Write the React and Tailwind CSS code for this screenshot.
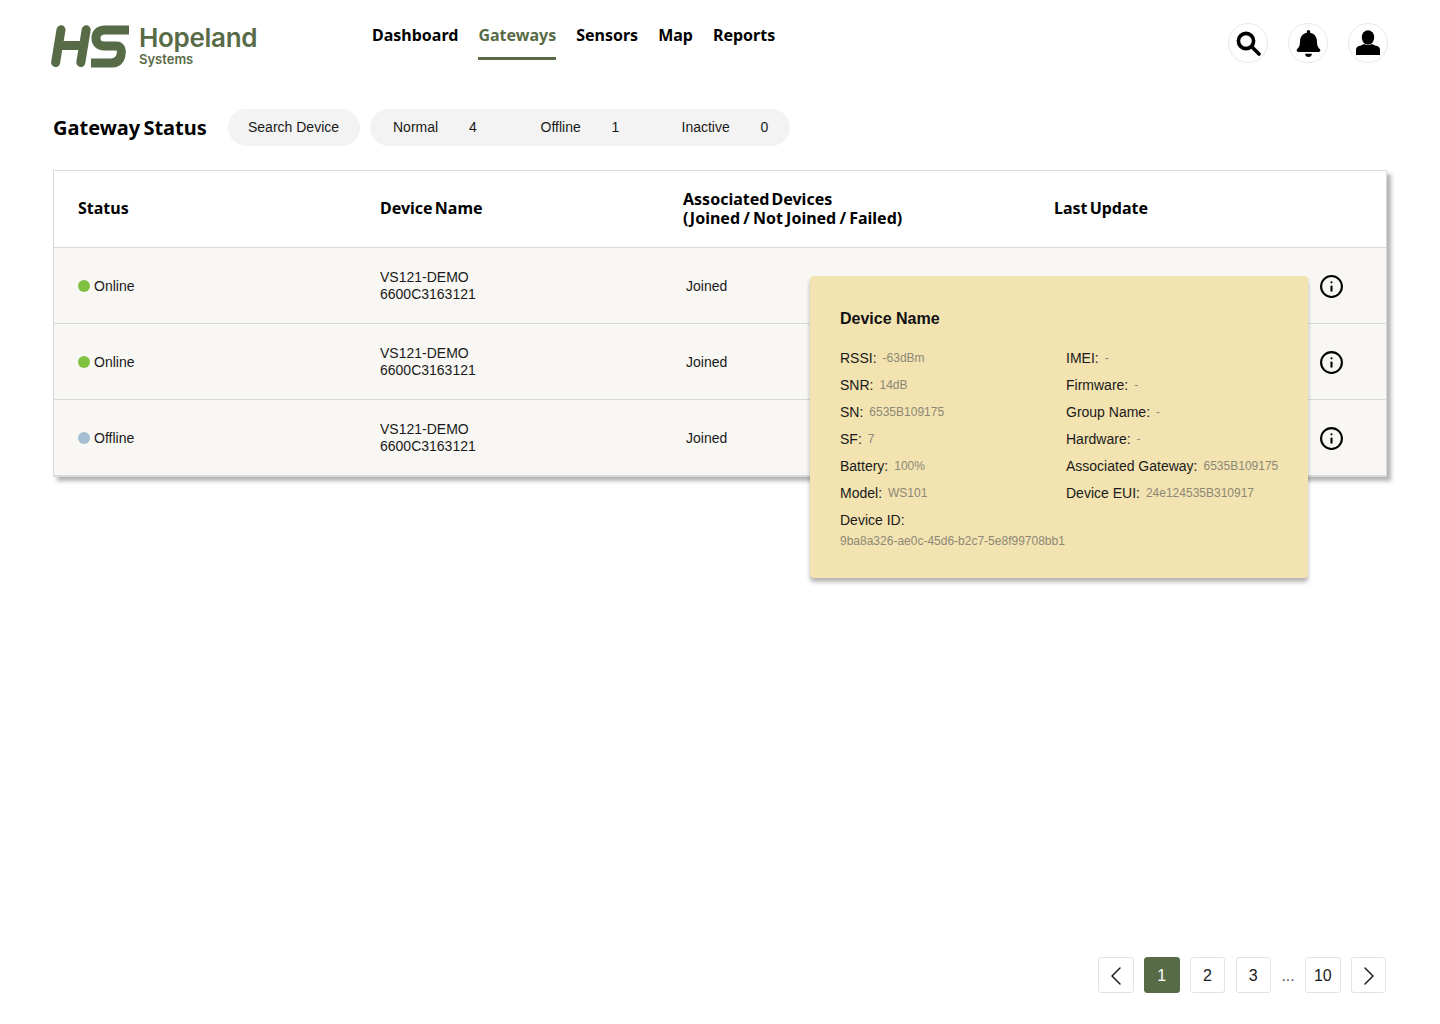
// App.jsx
import React from 'react';
import { FaBell } from 'react-icons/fa';
import { FiChevronLeft, FiChevronRight, FiInfo } from 'react-icons/fi';

const ROWS = [
  { status: 'Online', dot: 'bg-[#7fc241]' },
  { status: 'Online', dot: 'bg-[#7fc241]' },
  { status: 'Offline', dot: 'bg-[#a3bfd1]' },
];

const LEFT_DETAILS = [
  ['RSSI:', '-63dBm'],
  ['SNR:', '14dB'],
  ['SN:', '6535B109175'],
  ['SF:', '7'],
  ['Battery:', '100%'],
  ['Model:', 'WS101'],
];

const RIGHT_DETAILS = [
  ['IMEI:', '-'],
  ['Firmware:', '-'],
  ['Group Name:', '-'],
  ['Hardware:', '-'],
  ['Associated Gateway:', '6535B109175'],
  ['Device EUI:', '24e124535B310917'],
];

const headingFont = "font-['Noto_Sans',sans-serif]";

const Logo = () => (
  <div className="flex items-start">
    <svg width="80" height="44" viewBox="0 0 80 44" fill="none" stroke="#586b47" strokeWidth="9">
      <path d="M4.6 37.5 L10 4.8" strokeLinecap="round" />
      <path d="M29.8 37.5 L35.2 4.8" strokeLinecap="round" />
      <path d="M8 20.5 L32 20.5" />
      <path d="M78 5 L54 5 C47 5 45 9 45 13 C45 18 48 21 53 21 L65 21 C70 21 71 25 70 30 C69 35 66 38 60 38 L40 38" />
    </svg>
    <div className="ml-[8px] flex flex-col font-['Inter',sans-serif] text-[#586b47]">
      <span className="text-[26px] leading-[25px] tracking-[-0.3px] font-semibold">Hopeland</span>
      <span className="mt-[1px] text-[13px] leading-[16px] font-semibold">Systems</span>
    </div>
  </div>
);

const NavBar = () => (
  <nav className={`flex gap-5 ${headingFont} text-base font-bold text-black`}>
    <a className="pt-[23px]">Dashboard</a>
    <a className="h-[60px] border-b-[3px] border-[#586b47] pt-[23px] text-[#586b47]">Gateways</a>
    <a className="pt-[23px]">Sensors</a>
    <a className="pt-[23px]">Map</a>
    <a className="pt-[23px]">Reports</a>
  </nav>
);

const IconCircle = ({ children }) => (
  <button className="flex h-10 w-10 items-center justify-center rounded-full border border-[#e8e8e8] bg-white">
    {children}
  </button>
);

const Header = () => (
  <header className="flex h-[85px] items-start">
    <div className="w-[372px] shrink-0 pl-[51px] pt-[25px]">
      <Logo />
    </div>
    <NavBar />
    <div className="ml-auto flex gap-5 pr-[52px] pt-[23px]">
      <IconCircle>
        <svg width="26" height="26" viewBox="0 0 26 26" fill="none" stroke="#000" strokeWidth="3.6">
          <circle cx="11" cy="11" r="7.6" />
          <path d="M16.5 16.5 L24 24" strokeLinecap="round" />
        </svg>
      </IconCircle>
      <IconCircle>
        <FaBell size={27} color="#000" />
      </IconCircle>
      <IconCircle>
        <svg width="26" height="26" viewBox="0 0 26 26" fill="#000">
          <ellipse cx="13" cy="7.5" rx="6.2" ry="7.3" />
          <path d="M1 25 L1 19.5 C1 17 3 16 6 15.5 L9 14 C11 15.5 15 15.5 17 14 L20 15.5 C23 16 25 17 25 19.5 L25 25 Z" />
        </svg>
      </IconCircle>
    </div>
  </header>
);

const Toolbar = () => (
  <div className="mt-6 flex items-center pl-[53px]">
    <h1 className={`w-[175px] ${headingFont} text-xl font-bold [word-spacing:-2px] text-black`}>Gateway Status</h1>
    <div className="flex h-[37px] w-[132px] items-center rounded-full bg-[#f3f3f3] pb-[1px] pl-5 text-sm text-[#1a1a1a]">
      Search Device
    </div>
    <div className="ml-[10px] flex h-[37px] w-[420px] items-center rounded-full bg-[#f3f3f3] pb-[1px] pl-[23px] text-sm text-[#1a1a1a]">
      <span className="w-[76px]">Normal</span>
      <span className="w-[71.5px]">4</span>
      <span className="w-[71px]">Offline</span>
      <span className="w-[70px]">1</span>
      <span className="w-[79px]">Inactive</span>
      <span>0</span>
    </div>
  </div>
);

const DetailLine = ({ label, value }) => (
  <div className="flex h-[27px] items-center gap-[6px] whitespace-nowrap">
    <span className="text-sm text-[#1a1a1a]">{label}</span>
    <span className="text-xs text-[#8c8875]">{value}</span>
  </div>
);

const DevicePopover = () => (
  <div className="absolute left-[756px] top-[105px] z-10 h-[302px] w-[498px] rounded bg-[#f2e3b1] pl-[30px] pt-[33px] shadow-[0_4px_4px_rgba(0,0,0,0.3)]">
    <h3 className="text-base leading-[19px] font-bold text-[#111]">Device Name</h3>
    <div className="mt-[16px] flex">
      <div className="w-[226px]">
        {LEFT_DETAILS.map(([label, value]) => (
          <DetailLine key={label} label={label} value={value} />
        ))}
      </div>
      <div>
        {RIGHT_DETAILS.map(([label, value]) => (
          <DetailLine key={label} label={label} value={value} />
        ))}
      </div>
    </div>
    <div className="flex h-[27px] items-center text-sm text-[#1a1a1a]">Device ID:</div>
    <div className="mt-[1px] text-xs leading-[14px] text-[#8c8875]">9ba8a326-ae0c-45d6-b2c7-5e8f99708bb1</div>
  </div>
);

const GatewayTable = () => (
  <div className="relative mt-6 ml-[53px] w-[1334px] border border-[#d9d9d9] shadow-[4px_4px_4px_rgba(0,0,0,0.3)]">
    <div className={`grid h-[77px] grid-cols-[302px_303px_371px_1fr] items-center border-b border-[#d9d9d9] bg-white pb-[1px] pl-6 ${headingFont} text-base leading-[19px] font-bold [word-spacing:-2px] text-black`}>
      <div>Status</div>
      <div>Device Name</div>
      <div>
        Associated Devices
        <br />
        <span className="[word-spacing:-1px]">(Joined / Not Joined / Failed)</span>
      </div>
      <div>Last Update</div>
    </div>
    {ROWS.map((row, i) => (
      <div
        key={i}
        className="grid h-[76px] grid-cols-[302px_303px_1fr_67px] items-center border-b border-[#d9d9d9] bg-[#f8f7f3] pl-6 pt-[1px] text-sm leading-[17px] text-[#1a1a1a] last:h-[75px] last:border-b-0"
      >
        <div className="flex items-center gap-[4px]">
          <span className={`h-3 w-3 rounded-full ${row.dot}`} />
          {row.status}
        </div>
        <div>
          VS121-DEMO
          <br />
          6600C3163121
        </div>
        <div className="pl-[3px]">Joined</div>
        <FiInfo size={25} strokeWidth={2} color="#000" />
      </div>
    ))}
    <DevicePopover />
  </div>
);

const PageBox = ({ children, active }) => (
  <button
    className={`flex h-9 w-[35.5px] items-center justify-center rounded-[3px] border pt-[1px] text-base ${
      active ? 'border-[#586b47] bg-[#586b47] text-white' : 'border-[#e3e3e3] bg-white text-[#1a1a1a]'
    }`}
  >
    {children}
  </button>
);

const Pagination = () => (
  <div className="mt-auto flex items-center justify-end gap-[10.25px] pb-[31px] pr-[53.7px]">
    <PageBox>
      <FiChevronLeft size={32} strokeWidth={1.1} />
    </PageBox>
    <PageBox active>1</PageBox>
    <PageBox>2</PageBox>
    <PageBox>3</PageBox>
    <span className="w-[13.5px] pt-[1px] text-center text-base text-[#555]">...</span>
    <PageBox>10</PageBox>
    <PageBox>
      <FiChevronRight size={32} strokeWidth={1.1} />
    </PageBox>
  </div>
);

const App = () => (
  <div className="flex h-screen flex-col bg-white font-['Liberation_Sans',sans-serif]">
    <Header />
    <Toolbar />
    <GatewayTable />
    <Pagination />
  </div>
);

export default App;
